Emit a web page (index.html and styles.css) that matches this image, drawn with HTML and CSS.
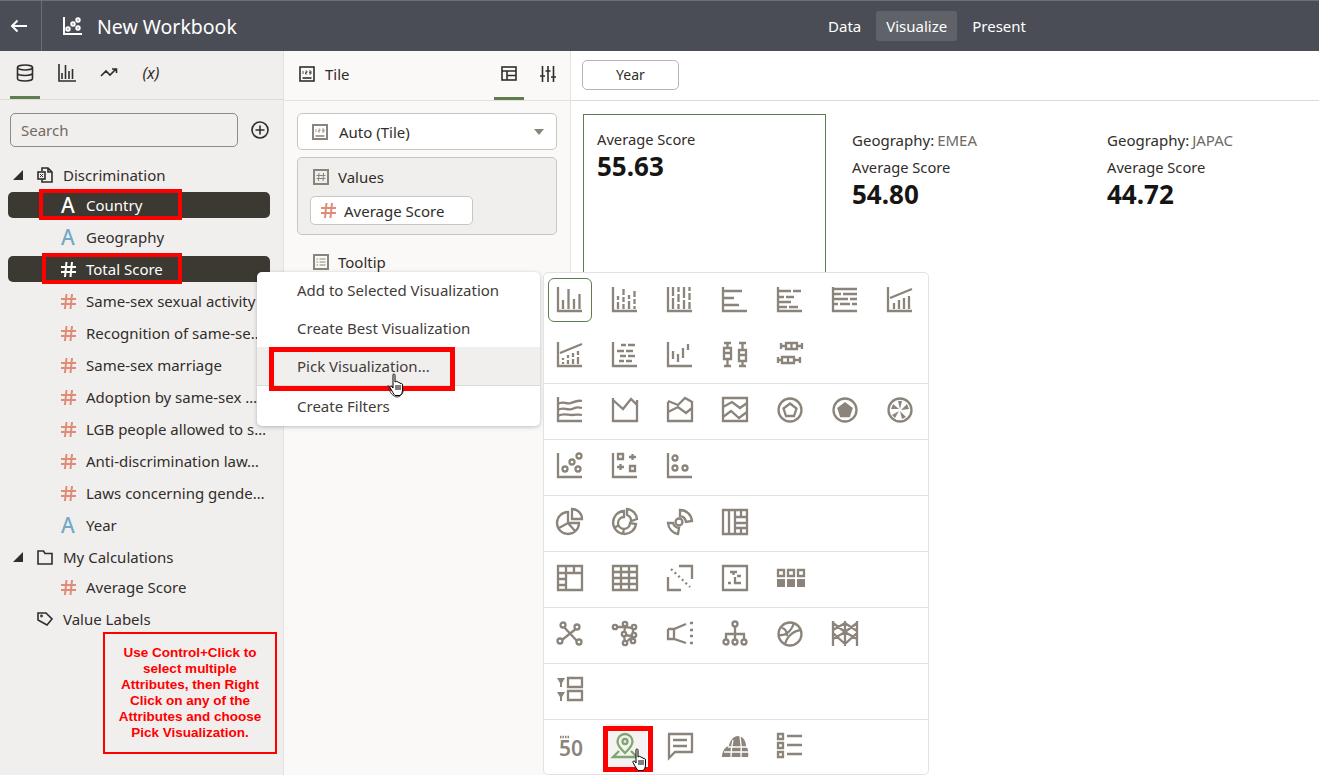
FILE: index.html
```html
<!DOCTYPE html>
<html lang="en">
<head>
    <meta charset="UTF-8">
    <title>New Workbook</title>
    <link rel="stylesheet" href="styles.css">
</head>
<body>
    <!-- top bar -->
    <header class="topbar">
        <div class="backBtn">
            <svg class="ic white" width="18" height="14" viewBox="0 0 18 14"><path d="M17 7H2M7.500 1.500L2 7l5.500 5.500"/></svg>
        </div>
        <div class="title">
            <svg class="ic white" width="20" height="20" viewBox="0 0 20 20"><path d="M1 1V18H19"/><circle cx="5" cy="13" r="1.700"/><circle cx="10" cy="8" r="1.700"/><circle cx="15" cy="4" r="1.700"/><circle cx="15" cy="12" r="1.700"/></svg>
            <span>New Workbook</span>
        </div>
        <nav class="mainNav">
            <a>Data</a>
            <a class="active">Visualize</a>
            <a>Present</a>
        </nav>
    </header>

    <div class="main">
        <!-- data panel -->
        <aside class="sidebar">
            <div class="sideTabs">
                <div class="sideTab active">
                    <svg class="ic dark thin" width="18" height="18" viewBox="0 0 18 18"><ellipse cx="9" cy="3.500" rx="7.500" ry="2.500"/><path d="M1.500 3.500V14.500C1.500 16 5 17 9 17s7.500-1 7.500-2.500V3.500M1.500 9C1.500 10.500 5 11.500 9 11.500S16.500 10.500 16.500 9"/></svg>
                </div>
                <div class="sideTab">
                    <svg class="ic dark thin" width="18" height="18" viewBox="0 0 18 18"><path d="M1 0V17H18M4 9V15M7.500 1V15M11 7V15M14.500 5V15"/></svg>
                </div>
                <div class="sideTab">
                    <svg class="ic dark thin" width="18" height="12" viewBox="0 0 18 12"><path d="M1 9L6 4L10 8L16 2M12 2H16.500V6"/></svg>
                </div>
                <div class="sideTab varTab">(x)</div>
            </div>
            <div class="searchRow">
                <div class="searchBox">Search</div>
                <svg class="ic dark thin" width="18" height="18" viewBox="0 0 18 18"><circle cx="9" cy="9" r="8"/><path d="M9 4.500V13.500M4.500 9H13.500"/></svg>
            </div>
            <div class="tree">
                <div class="treeRow group">
                    <span class="arrow"></span>
                    <svg class="ic dark thin" width="16" height="16" viewBox="0 0 16 16"><path d="M5 4V1H11L15 5V15H5V12"/><path d="M11 1V5H15"/><rect x="1" y="5" width="7" height="7"/><path d="M3 7L6 10M6 7L3 10" stroke-width="1"/></svg>
                    <span>Discrimination</span>
                </div>
                <div class="treeRow item selected"><span class="attr">A</span><span class="name">Country</span></div>
                <div class="treeRow item"><span class="attr blue">A</span><span class="name">Geography</span></div>
                <div class="treeRow item selected"><svg class="hashIc" viewBox="0 0 15 15"><path d="M5.500 0L4 15M11 0L9.500 15M0 5H15M0 10H15"/></svg><span class="name">Total Score</span></div>
                <div class="treeRow item"><svg class="hashIc red" viewBox="0 0 15 15"><path d="M5.500 0L4 15M11 0L9.500 15M0 5H15M0 10H15"/></svg><span class="name">Same-sex sexual activity</span></div>
                <div class="treeRow item"><svg class="hashIc red" viewBox="0 0 15 15"><path d="M5.500 0L4 15M11 0L9.500 15M0 5H15M0 10H15"/></svg><span class="name">Recognition of same-se…</span></div>
                <div class="treeRow item"><svg class="hashIc red" viewBox="0 0 15 15"><path d="M5.500 0L4 15M11 0L9.500 15M0 5H15M0 10H15"/></svg><span class="name">Same-sex marriage</span></div>
                <div class="treeRow item"><svg class="hashIc red" viewBox="0 0 15 15"><path d="M5.500 0L4 15M11 0L9.500 15M0 5H15M0 10H15"/></svg><span class="name">Adoption by same-sex …</span></div>
                <div class="treeRow item"><svg class="hashIc red" viewBox="0 0 15 15"><path d="M5.500 0L4 15M11 0L9.500 15M0 5H15M0 10H15"/></svg><span class="name">LGB people allowed to s…</span></div>
                <div class="treeRow item"><svg class="hashIc red" viewBox="0 0 15 15"><path d="M5.500 0L4 15M11 0L9.500 15M0 5H15M0 10H15"/></svg><span class="name">Anti-discrimination law…</span></div>
                <div class="treeRow item"><svg class="hashIc red" viewBox="0 0 15 15"><path d="M5.500 0L4 15M11 0L9.500 15M0 5H15M0 10H15"/></svg><span class="name">Laws concerning gende…</span></div>
                <div class="treeRow item"><span class="attr blue">A</span><span class="name">Year</span></div>
                <div class="treeRow group">
                    <span class="arrow"></span>
                    <svg class="ic dark thin" width="16" height="15" viewBox="0 0 16 15"><path d="M1 1H6.500L8 3.500H15V14H1Z"/></svg>
                    <span>My Calculations</span>
                </div>
                <div class="treeRow item"><svg class="hashIc red" viewBox="0 0 15 15"><path d="M5.500 0L4 15M11 0L9.500 15M0 5H15M0 10H15"/></svg><span class="name">Average Score</span></div>
                <div class="treeRow group plain">
                    <svg class="ic dark thin" width="16" height="14" viewBox="0 0 16 14"><path d="M1 1H9L15 7L10 13L1 8Z"/><circle cx="4.500" cy="4" r=".6"/></svg>
                    <span>Value Labels</span>
                </div>
            </div>
        </aside>

        <!-- grammar panel -->
        <section class="grammar">
            <div class="grammarHead">
                <svg class="ic dark thin" width="16" height="16" viewBox="0 0 16 16"><rect x="1" y="1" width="14" height="14"/><path d="M3.500 12H12.500"/><path d="M4 5V8M6.500 5H8V6.500H6.500V8H8M10 5H12V8H10M10 6.500H12" stroke-width=".8"/></svg>
                <span class="grammarName">Tile</span>
                <div class="grammarTab active">
                    <svg class="ic dark thin" width="16" height="15" viewBox="0 0 16 15"><rect x="1" y="1" width="14" height="13"/><path d="M1 5H15M6 5V14M6 9.500H15"/></svg>
                </div>
                <div class="grammarTab">
                    <svg class="ic dark thin" width="16" height="16" viewBox="0 0 16 16"><path d="M2.500 0V16M8 0V16M13.500 0V16M0 10H5M5.500 5H10.500M11 11H16"/></svg>
                </div>
            </div>
            <div class="grammarBody">
                <div class="vizSelect">
                    <svg class="ic grey" width="16" height="16" viewBox="0 0 16 16"><rect x="1" y="1" width="14" height="14"/><path d="M3.500 12H12.500" stroke-width="1.500"/><path d="M4 5V8M6.500 5H8V6.500H6.500V8H8M10 5H12V8H10M10 6.500H12" stroke-width=".8"/></svg>
                    <span>Auto (Tile)</span>
                    <span class="caret"></span>
                </div>
                <div class="dropZone">
                    <div class="zoneLabel">
                        <svg class="ic grey" width="16" height="16" viewBox="0 0 16 16"><rect x="1" y="1" width="14" height="14"/><path d="M6 4L5.500 12M10.500 4L10 12M3.500 6.500H12.500M3.500 9.500H12.500" stroke-width="1"/></svg>
                        <span>Values</span>
                    </div>
                    <div class="pill"><svg class="hashIc red" viewBox="0 0 15 15"><path d="M5.500 0L4 15M11 0L9.500 15M0 5H15M0 10H15"/></svg>Average Score</div>
                </div>
                <div class="zoneLabel tooltipZone">
                    <svg class="ic grey" width="16" height="16" viewBox="0 0 16 16"><rect x="1" y="1" width="14" height="14"/><path d="M3.500 5H5M6.500 5H12.500M3.500 8H5M6.500 8H12.500M3.500 11H5M6.500 11H12.500" stroke-width="1"/></svg>
                    <span>Tooltip</span>
                </div>
            </div>
        </section>

        <!-- canvas -->
        <section class="canvas">
            <div class="filterBar"><div class="filterPill">Year</div></div>
            <div class="tiles">
                <div class="tile current">
                    <div class="tileLabel">Average Score</div>
                    <div class="tileValue">55.63</div>
                </div>
                <div class="tile">
                    <div class="tileGroup">Geography:<span>EMEA</span></div>
                    <div class="tileLabel">Average Score</div>
                    <div class="tileValue">54.80</div>
                </div>
                <div class="tile">
                    <div class="tileGroup">Geography:<span>JAPAC</span></div>
                    <div class="tileLabel">Average Score</div>
                    <div class="tileValue">44.72</div>
                </div>
            </div>
        </section>
    </div>

    <!-- right click menu -->
    <div class="contextMenu">
        <div class="menuItem">Add to Selected Visualization</div>
        <div class="menuItem">Create Best Visualization</div>
        <div class="menuItem hover">Pick Visualization...</div>
        <div class="menuItem">Create Filters</div>
    </div>

    <!-- visualization picker -->
    <div class="vizPicker">
        <div class="vizSection first">
            <div class="vizCell picked"><svg class="viz" viewBox="0 0 26 26"><path d="M1 0V24H25M6 13V22M11.500 2V22M17 12V22M22.500 7V22"/></svg></div>
            <div class="vizCell"><svg class="viz" viewBox="0 0 26 26"><path d="M1 0V24H25M6 9V13M6 15V22M11.500 2V8M11.500 10V15M11.500 17V22M17 8V12M17 14V22M22.500 4V10M22.500 12V17M22.500 19V22"/></svg></div>
            <div class="vizCell"><svg class="viz" viewBox="0 0 26 26"><path d="M1 0V24H25M6 0V9M6 11V22M11.500 0V5M11.500 7V15M11.500 17V22M17 0V11M17 13V22M22.500 0V4M22.500 6V13M22.500 15V22"/></svg></div>
            <div class="vizCell"><svg class="viz" viewBox="0 0 26 26"><path d="M1 0V24H25M1 4H20M1 11H12M1 18H17"/></svg></div>
            <div class="vizCell"><svg class="viz" viewBox="0 0 26 26"><path d="M1 0V24H25M1 4H14M16 4H24M1 10H7M9 10H17M1 15H14M1 20H10M12 20H21"/></svg></div>
            <div class="vizCell"><svg class="viz" viewBox="0 0 26 26"><path d="M1 0V24H25M1 2H25M1 7H9M11 7H25M1 12H16M18 12H25M1 17H6M8 17H18M20 17H25"/></svg></div>
            <div class="vizCell"><svg class="viz" viewBox="0 0 26 26"><path d="M1 0V24H25M3 11L25 2M7 16V22M12 13V22M17 11V22M22 9V22"/></svg></div>
            <div class="vizCell"><svg class="viz" viewBox="0 0 26 26"><path d="M1 0V24H25M3 11L25 2M6 16V18M6 20V22M11 13V16M11 18V22M16 11V15M16 17V22M21 9V13M21 15V22"/></svg></div>
            <div class="vizCell"><svg class="viz" viewBox="0 0 26 26"><path d="M1 0V24H25M9 3H14M16 3H23M5 9H12M14 9H21M8 14H14M16 14H23M7 19H12M14 19H20"/></svg></div>
            <div class="vizCell"><svg class="viz" viewBox="0 0 26 26"><path d="M1 0V24H25M6 9V17M11 12V20M16 6V16M21 2V8"/></svg></div>
            <div class="vizCell"><svg class="viz" viewBox="0 0 26 26"><path d="M2 1H9M5.500 1V6M2 6H9V17H2ZM2 11H9M5.500 17V24M2 24H9M17 1H24M20.500 1V8M17 8H24V19H17ZM17 13H24M20.500 19V24M17 24H24"/></svg></div>
            <div class="vizCell"><svg class="viz" viewBox="0 0 26 26"><path d="M4 1V7M4 4H9M9 1H20V7H9ZM14.500 1V7M20 4H25M25 1V7M1 15V21M1 18H5M5 15H17V21H5ZM11 15V21M17 18H23M23 15V21"/></svg></div>
        </div>
        <div class="vizSection">
            <div class="vizCell"><svg class="viz" viewBox="0 0 26 26"><path d="M1 0V24H25M1 7C6 3 9 8 14 6S21 3 25 4M1 13C6 9 10 14 15 12S21 10 25 11M1 19C6 16 10 18 15 18S21 17 25 18"/></svg></div>
            <div class="vizCell"><svg class="viz" viewBox="0 0 26 26"><path d="M1 1V24H25V3M1 3L11 12L19 2L25 8"/></svg></div>
            <div class="vizCell"><svg class="viz" viewBox="0 0 26 26"><path d="M1 5V24H25V5L18 1L11 8L1 4M1 15L11 10L19 16L25 11"/></svg></div>
            <div class="vizCell"><svg class="viz" viewBox="0 0 26 26"><path d="M1 1H25V24H1ZM1 10L10 5L18 11L25 6M1 20L9 14L17 21L25 15"/></svg></div>
            <div class="vizCell"><svg class="viz" viewBox="0 0 26 26"><circle cx="13" cy="13" r="11.500"/><path d="M13 6.500L19.500 11.500L17 19H9L6.500 11.500Z"/></svg></div>
            <div class="vizCell"><svg class="viz" viewBox="0 0 26 26"><circle cx="13" cy="13" r="11.500"/><path class="solid" d="M13 6.500L19.500 11.500L17 19H9L6.500 11.500Z"/></svg></div>
            <div class="vizCell"><svg class="viz" viewBox="0 0 26 26"><circle cx="13" cy="13" r="11.500"/><path class="solid noStroke" d="M13 12L11 4H15ZM14 13L20 7L22 12ZM13 14L19 20L15 22ZM12 14L8 21L5 18ZM12 12L4 12L6 7Z"/></svg></div>
        </div>
        <div class="vizSection">
            <div class="vizCell"><svg class="viz" viewBox="0 0 26 26"><path d="M1 0V24H25"/><circle cx="8" cy="16" r="2.500"/><circle cx="15" cy="9" r="2.500"/><circle cx="22" cy="3" r="2.500"/><circle cx="21" cy="16" r="2.500"/></svg></div>
            <div class="vizCell"><svg class="viz" viewBox="0 0 26 26"><path d="M1 0V24H25M6 1H11V6H6ZM17 4H24M20.500 1V7M5 14H12M8.500 11V17M18 13H23V18H18Z"/></svg></div>
            <div class="vizCell"><svg class="viz" viewBox="0 0 26 26"><path d="M1 0V24H25"/><circle cx="8" cy="5" r="2.500"/><circle cx="8" cy="15" r="2.500"/><circle cx="18" cy="15" r="2.500"/></svg></div>
        </div>
        <div class="vizSection">
            <div class="vizCell"><svg class="viz" viewBox="0 0 26 26"><path d="M15 0A10 10 0 0 1 25 10H15ZM11 3A11 11 0 1 0 22 14H11ZM11 14L2 19M11 14L18 22"/></svg></div>
            <div class="vizCell"><svg class="viz" viewBox="0 0 26 26"><path d="M12 2A11.500 11.500 0 1 0 24 15L18 14A6 6 0 1 1 12 8ZM15 0A11 11 0 0 1 25 10L19 12A6 6 0 0 0 15 6ZM2 19L7 16M11 25L12 19"/></svg></div>
            <div class="vizCell"><svg class="viz" viewBox="0 0 26 26"><circle cx="12" cy="13" r="3.500"/><path d="M13 1A12 12 0 0 1 25 12L19 13A7 7 0 0 0 13 7ZM1 14A12 12 0 0 0 11 25L12 19A7 7 0 0 1 6 14Z"/></svg></div>
            <div class="vizCell"><svg class="viz" viewBox="0 0 26 26"><path d="M1 1H25V25H1ZM7 1V25M13 1V25M19 1V8M13 8H25M13 14H25M13 19H25M19 19V25"/></svg></div>
        </div>
        <div class="vizSection">
            <div class="vizCell"><svg class="viz" viewBox="0 0 26 26"><path d="M1 1H25V25H1ZM1 8H25M9 1V25M17 1V8M1 14H9M1 20H9"/></svg></div>
            <div class="vizCell"><svg class="viz" viewBox="0 0 26 26"><path d="M1 1H25V25H1ZM1 7H25M1 13H25M1 19H25M9 1V25M17 1V25"/></svg></div>
            <div class="vizCell"><svg class="viz" viewBox="0 0 26 26"><path d="M12 1H25V14M1 12V25H14"/><path d="M4 4L23 22" stroke-dasharray="2 3"/></svg></div>
            <div class="vizCell"><svg class="viz" viewBox="0 0 26 26"><path d="M1 1H25V25H1ZM8 7H15M11.500 7V10M15 11H19M6 18H9M13 12V18H19"/></svg></div>
            <div class="vizCell"><svg class="viz" viewBox="0 0 26 26"><path d="M1 5H7V11H1ZM11 5H17V11H11ZM21 5H27V11H21Z"/><path class="solid noStroke" d="M0 14H8V22H0ZM10 14H18V22H10ZM20 14H28V22H20Z"/></svg></div>
        </div>
        <div class="vizSection">
            <div class="vizCell"><svg class="viz" viewBox="0 0 26 26"><path d="M6 5L20 20M20 7L5 19"/><circle class="fillWhite" cx="6" cy="4" r="2.500"/><circle class="fillWhite" cx="20" cy="6" r="2.500"/><circle class="fillWhite" cx="3" cy="20" r="2.500"/><circle class="fillWhite" cx="22" cy="21" r="2.500"/></svg></div>
            <div class="vizCell"><svg class="viz" viewBox="0 0 26 26"><path d="M4 6H13L12 14L13 22L21 15L21 7L13 6M12 14L20 15"/><circle class="fillWhite" cx="3" cy="6" r="2.200"/><circle class="fillWhite" cx="13" cy="3" r="2.200"/><circle class="fillWhite" cx="22" cy="6" r="2.200"/><circle class="fillWhite" cx="12" cy="13" r="2.200"/><circle class="fillWhite" cx="22" cy="14" r="2.200"/><circle class="fillWhite" cx="13" cy="22" r="2.200"/><circle class="fillWhite" cx="21" cy="20" r="2.200"/></svg></div>
            <div class="vizCell"><svg class="viz" viewBox="0 0 26 26"><path d="M1 8H7L19 3M1 8V18H7L19 22M7 8V18M23 2H26M23 9H26M23 15H26M23 22H26"/></svg></div>
            <div class="vizCell"><svg class="viz" viewBox="0 0 26 26"><path d="M13 6V13M4 18V13H22V18M13 13V18"/><circle cx="13" cy="3" r="2.500"/><circle cx="4" cy="21" r="2.500"/><circle cx="13" cy="21" r="2.500"/><circle cx="22" cy="21" r="2.500"/></svg></div>
            <div class="vizCell"><svg class="viz" viewBox="0 0 26 26"><circle cx="13" cy="13" r="11.500"/><path d="M2 14C8 15 14 11 17 2M8 24C9 17 15 10 24 9M5 7C9 8 10 11 10 15"/></svg></div>
            <div class="vizCell"><svg class="viz" viewBox="0 0 26 26"><path d="M1 0V25M13 0V25M25 0V25M1 2L13 11L25 2M1 9L13 2L25 10M1 18L13 11L25 18M1 12L13 23L25 12"/></svg></div>
        </div>
        <div class="vizSection">
            <div class="vizCell"><svg class="viz" viewBox="0 0 26 26"><path class="solid noStroke" d="M0 1H8L5 6V10H3V6ZM0 15H8L5 20V24H3V20Z"/><path d="M11 1H25V10H11ZM11 14H25V23H11Z"/></svg></div>
        </div>
        <div class="vizSection last">
            <div class="vizCell"><svg class="viz" viewBox="0 0 26 26"><path d="M3 4H12" stroke-dasharray="1.500 1"/><text class="vizText" x="2" y="23">50</text></svg></div>
            <div class="vizCell hoverCell"><svg class="viz green" viewBox="0 0 26 26"><path d="M13 1A7.500 7.500 0 0 1 20.500 8.500C20.500 13 13 20 13 20S5.500 13 5.500 8.500A7.500 7.500 0 0 1 13 1Z"/><circle cx="13" cy="8.500" r="2.500"/><path d="M7 18L1 24H25L19 18"/></svg></div>
            <div class="vizCell"><svg class="viz" viewBox="0 0 26 26"><path d="M1 1H25V19H8L2 25V1ZM6 7H20M6 13H20"/></svg></div>
            <div class="vizCell"><svg class="viz" viewBox="0 0 26 26"><path class="solid noStroke" d="M0 24C0 18 3 14 7 13C8 7 12 3 16 3C20 3 24 7 24 13C26 15 27 20 26 24Z"/><path class="whiteLine" d="M2 19H27M6 14H25M11 7Q9 15 9 24M18 3Q20 14 19 24"/></svg></div>
            <div class="vizCell"><svg class="viz" viewBox="0 0 26 26"><path d="M1 1H6V6H1ZM1 10H6V15H1ZM1 19H6V24H1ZM10 3H25M10 12H25M10 21H25"/></svg></div>
        </div>
    </div>

    <!-- tutorial marks put on top of the screenshot -->
    <div class="mark countryMark"></div>
    <div class="mark totalMark"></div>
    <div class="mark pickMark"></div>
    <div class="mark mapMark"></div>
    <div class="noteBox">Use Control+Click to select multiple Attributes, then Right Click on any of the Attributes and choose Pick Visualization.</div>

    <svg class="cursor cursorMenu" width="16" height="24" viewBox="0 0 16 24"><path class="busyArc" d="M-1 12C0 20 5 24 8 24S14 21 14.500 17"/><path d="M4 1.500C5 .5 6 1 6 2.500V9L7 8.500C8 8 9 8.500 9 9.500C10 9 11 9.500 11 10.500C12 10 13.500 10.500 13.500 12V17C13.500 20 12 22 11 22.500H6C4.500 21 3 18 1 14.500C.5 13 2 12.500 3 13.500L4 15Z"/><path d="M7 12V17M9 12V17M11 12V17"/></svg>
    <svg class="cursor cursorMap" width="16" height="24" viewBox="0 0 16 24"><path d="M4 1.500C5 .5 6 1 6 2.500V9L7 8.500C8 8 9 8.500 9 9.500C10 9 11 9.500 11 10.500C12 10 13.500 10.500 13.500 12V17C13.500 20 12 22 11 22.500H6C4.500 21 3 18 1 14.500C.5 13 2 12.500 3 13.500L4 15Z"/><path d="M7 12V17M9 12V17M11 12V17"/></svg>
</body>
</html>
```

FILE: styles.css
```css
* {
    box-sizing: border-box;
}
html, body {
    height: 100%;
}
body {
    margin: 0;
    overflow: hidden;
    font-family: "Noto Sans", "Open Sans", sans-serif;
    font-size: 15px;
    color: #312d2a;
    background: #fff;
}

/* line icons */
.ic {
    fill: none;
    stroke-width: 2;
    flex: none;
}
.ic.thin {
    stroke-width: 1.600;
}
.ic.white {
    stroke: #fff;
}
.ic.dark {
    stroke: #312d2a;
}
.ic.grey {
    stroke: #8b847b;
}
.hashIc {
    flex: none;
    width: 15px;
    height: 15px;
    fill: none;
    stroke: #fff;
    stroke-width: 2;
}
.hashIc.red {
    stroke: #e08a78;
}

/* top bar */
.topbar {
    display: flex;
    align-items: center;
    height: 51px;
    background: #4a4d55;
    border-top: 1px solid #6f6f6f;
    color: #fff;
}
.backBtn {
    display: flex;
    align-items: center;
    padding-left: 10px;
    width: 42px;
    height: 50px;
    border-right: 1px solid #6a6d74;
}
.title {
    display: flex;
    align-items: center;
    gap: 14px;
    padding-left: 21px;
    font-size: 19.500px;
}
.mainNav {
    display: flex;
    gap: 5px;
    margin-left: auto;
    margin-right: 283px;
}
.mainNav a {
    padding: 0 10px;
    height: 30px;
    line-height: 30px;
    border-radius: 3px;
}
.mainNav a.active {
    background: #5f6369;
}

.main {
    display: flex;
    height: 724px;
}

/* data panel */
.sidebar {
    width: 284px;
    flex: none;
    background: #f1efed;
    border-right: 1px solid #e4e2df;
}
.sideTabs {
    display: flex;
    height: 49px;
    padding-left: 10px;
    gap: 12px;
    border-bottom: 1px solid #dedbd7;
}
.sideTab {
    display: flex;
    align-items: center;
    justify-content: center;
    width: 30px;
    height: 48px;
    padding-bottom: 4px;
}
.sideTab.active {
    border-bottom: 3px solid #5f7d4f;
    padding-bottom: 1px;
}
.varTab {
    font-style: italic;
    font-size: 16px;
}
.searchRow {
    display: flex;
    align-items: center;
    gap: 13px;
    padding: 13px 0 0 10px;
}
.searchBox {
    width: 228px;
    height: 34px;
    line-height: 32px;
    padding-left: 10px;
    border: 1px solid #8f8a84;
    border-radius: 5px;
    color: #6f6a64;
}
.tree {
    padding: 15px 0 0 8px;
}
.treeRow {
    display: flex;
    align-items: center;
    width: 262px;
    height: 26px;
    margin-bottom: 6px;
    border-radius: 5px;
}
.treeRow.group {
    margin-bottom: 4px;
    padding-left: 5px;
    gap: 10px;
}
.treeRow.plain {
    padding-left: 29px;
}
.treeRow.item {
    padding: 0 2px 0 53px;
}
.arrow {
    width: 0;
    height: 0;
    margin-right: 4px;
    border-left: 10px solid transparent;
    border-bottom: 10px solid #312d2a;
}
.treeRow.selected {
    background: #3c3832;
    color: #fff;
}
.name {
    white-space: nowrap;
}
.treeRow .hashIc {
    margin-right: 10px;
}
.attr {
    flex: none;
    width: 25px;
    font-size: 21px;
    font-weight: 500;
    line-height: 26px;
}
.attr.blue {
    color: #74a8c4;
}

/* grammar panel */
.grammar {
    width: 287px;
    flex: none;
    background: #fbf9f8;
    border-right: 1px solid #e4e2df;
}
.grammarHead {
    display: flex;
    align-items: center;
    height: 50px;
    padding-left: 15px;
    border-bottom: 1px solid #e4e2df;
}
.grammarName {
    flex: 1;
    margin-left: 10px;
    padding-bottom: 4px;
}
.grammarHead > svg {
    margin-bottom: 4px;
}
.grammarTab {
    display: flex;
    align-items: center;
    justify-content: center;
    width: 30px;
    height: 49px;
    padding-bottom: 4px;
    margin-right: 9px;
}
.grammarTab:last-child {
    margin-right: 7px;
}
.grammarTab.active {
    border-bottom: 3px solid #5f7d4f;
    padding-bottom: 1px;
}
.grammarBody {
    padding: 12px 13px 0;
}
.vizSelect {
    display: flex;
    align-items: center;
    gap: 11px;
    height: 37px;
    padding: 0 12px 0 14px;
    background: #fff;
    border: 1px solid #c9c5bf;
    border-radius: 5px;
}
.caret {
    width: 0;
    height: 0;
    margin-left: auto;
    border-left: 5px solid transparent;
    border-right: 5px solid transparent;
    border-top: 6px solid #8b847b;
}
.dropZone {
    height: 78px;
    margin-top: 7px;
    padding: 10px 12px 0;
    background: #f1efed;
    border: 1px solid #c9c5bf;
    border-radius: 5px;
}
.zoneLabel {
    display: flex;
    align-items: center;
    gap: 9px;
    height: 18px;
    padding-left: 3px;
}
.pill {
    display: flex;
    align-items: center;
    width: 163px;
    height: 29px;
    margin-top: 10px;
    padding-left: 10px;
    background: #fff;
    border: 1px solid #c9c5bf;
    border-radius: 5px;
}
.pill .hashIc {
    margin-right: 8px;
}
.tooltipZone {
    margin-top: 18px;
    padding-left: 16px;
}

/* canvas */
.canvas {
    flex: 1;
    min-width: 0;
}
.filterBar {
    height: 50px;
    padding: 9px 0 0 11px;
    border-bottom: 1px solid #dedbd7;
}
.filterPill {
    width: 97px;
    height: 30px;
    line-height: 28px;
    text-align: center;
    border: 1px solid #b8b4ae;
    border-radius: 5px;
    font-size: 14px;
}
.tiles {
    display: flex;
    padding: 13px 0 0 12px;
}
.tile {
    width: 255px;
    height: 190px;
    padding: 15px 14px 0;
    flex: none;
}
.tile.current {
    width: 243px;
    margin-right: 12px;
    border: 1px solid #5f7d4f;
    padding: 14px 13px 0;
}
.tileGroup {
    margin-bottom: 6px;
    line-height: 22px;
}
.tileGroup span {
    margin-left: 3px;
    color: #6f6a64;
}
.tileLabel {
    margin-bottom: 1px;
    font-size: 14.700px;
    line-height: 20px;
}
.tileValue {
    font-size: 26px;
    font-weight: 700;
    line-height: 32px;
    color: #161513;
}

/* right click menu */
.contextMenu {
    position: absolute;
    left: 257px;
    top: 272px;
    width: 283px;
    height: 154px;
    background: #fff;
    border-radius: 5px;
    box-shadow: 0 1px 4px rgba(0, 0, 0, .25);
}
.menuItem {
    height: 38px;
    line-height: 38px;
    padding-left: 40px;
    color: #3f3c39;
}
.menuItem:first-child {
    height: 37px;
    line-height: 37px;
}
.menuItem:last-child {
    height: 40px;
    line-height: 40px;
}
.menuItem.hover {
    height: 39px;
    line-height: 38px;
    background: #f1efed;
    border-bottom: 1px solid #dedbd7;
}

/* visualization picker */
.vizPicker {
    position: absolute;
    left: 543px;
    top: 272px;
    width: 386px;
    height: 503px;
    background: #fff;
    border: 1px solid #e4e2df;
    border-radius: 5px;
}
.vizSection {
    display: grid;
    grid-template-columns: repeat(7, 44px);
    gap: 11px;
    padding: 4px 0 7px 4px;
    border-bottom: 1px solid #e4e2df;
}
.vizSection.first {
    padding: 5px 0 6px 4px;
}
.vizSection.last {
    border-bottom: none;
}
.vizCell {
    display: flex;
    align-items: center;
    justify-content: center;
    height: 44px;
    border-radius: 6px;
}
.vizCell.picked {
    border: 1px solid #5f7d4f;
}
.vizCell.hoverCell {
    background: #f4f3f1;
}
.viz {
    width: 26px;
    height: 26px;
    overflow: visible;
    fill: none;
    stroke: #8b847b;
    stroke-width: 2.300;
}
.viz .solid {
    fill: #8b847b;
}
.viz .noStroke {
    stroke: none;
}
.viz .fillWhite {
    fill: #fff;
}
.viz .whiteLine {
    stroke: #fff;
    stroke-width: 1.300;
}
.viz.green {
    stroke: #7fa671;
}
.vizText {
    font-family: "Noto Sans", sans-serif;
    font-size: 21px;
    font-weight: 600;
    fill: #8b847b;
    stroke: none;
}

/* tutorial marks */
.mark {
    position: absolute;
    border: 4px solid #ff0000;
}
.countryMark {
    left: 39px;
    top: 189px;
    width: 143px;
    height: 31px;
}
.totalMark {
    left: 42px;
    top: 253px;
    width: 140px;
    height: 31px;
}
.pickMark {
    left: 269px;
    top: 347px;
    width: 186px;
    height: 44px;
    border-width: 5px;
}
.mapMark {
    left: 603px;
    top: 726px;
    width: 50px;
    height: 46px;
    border-width: 5px;
}
.noteBox {
    position: absolute;
    left: 103px;
    top: 632px;
    width: 174px;
    height: 122px;
    padding: 11px 12px 0;
    border: 2px solid #ff0000;
    font-family: "Liberation Sans", Arial, sans-serif;
    font-size: 13.500px;
    font-weight: 700;
    line-height: 16px;
    text-align: center;
    color: #ff0000;
}
.cursor {
    position: absolute;
    overflow: visible;
    fill: #fff;
    stroke: #000;
    stroke-width: 1;
}
.cursor .busyArc {
    fill: none;
    stroke: #3c3832;
}
.cursorMenu {
    left: 389px;
    top: 373px;
}
.cursorMap {
    left: 632px;
    top: 748px;
}
```
